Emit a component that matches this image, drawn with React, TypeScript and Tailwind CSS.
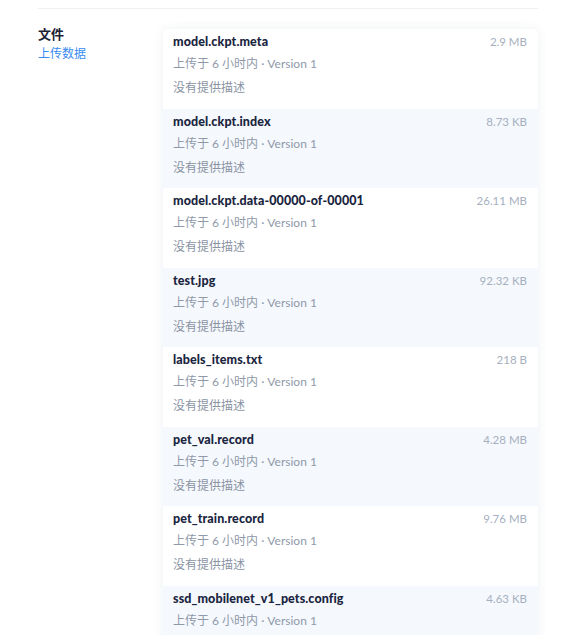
const files = [
    { name: 'model.ckpt.meta', size: '2.9 MB' },
    { name: 'model.ckpt.index', size: '8.73 KB' },
    { name: 'model.ckpt.data-00000-of-00001', size: '26.11 MB' },
    { name: 'test.jpg', size: '92.32 KB' },
    { name: 'labels_items.txt', size: '218 B' },
    { name: 'pet_val.record', size: '4.28 MB' },
    { name: 'pet_train.record', size: '9.76 MB' },
    { name: 'ssd_mobilenet_v1_pets.config', size: '4.63 KB' },
]

export default function App() {
    return (
        <div className="h-[635px] w-[573px] overflow-hidden bg-white pt-2 font-['Lato','Noto_Sans_CJK_SC',sans-serif]">
            <div className="ml-[38px] w-[500px] border-t border-[#eef0f4]">
                <div className="flex pt-[20px]">
                    {/* left label */}
                    <div className="-mt-[5px] w-[125px] shrink-0">
                        <h3 className="text-[13px] font-bold leading-[20px] text-[#1b2233]">文件</h3>
                        <a className="block text-[12px] leading-[20px] text-[#3a8bf2]">上传数据</a>
                    </div>
                    {/* file list */}
                    <div className="flex-1 overflow-hidden rounded-t-md shadow-[0_0_12px_rgba(30,50,90,0.07)]">
                        {files.map((f, i) => (
                            <div
                                key={f.name}
                                className={`h-[79.5px] pl-[10px] pr-[11px] pt-[3px] ${i % 2 === 1 ? 'bg-[#f5f8fd]' : 'bg-white'}`}
                            >
                                <div className="flex justify-between leading-[20px]">
                                    <span className="text-[12.5px] font-black tracking-[0.1px] text-[#1a2540]">{f.name}</span>
                                    <span className="text-[11.5px] text-[#a6b0c0]">{f.size}</span>
                                </div>
                                <p className="mt-[2px] text-[12px] leading-[20px] text-[#8f99aa]">上传于 6 小时内 · Version 1</p>
                                <p className="mt-[4px] text-[12px] leading-[20px] text-[#8a93a3]">没有提供描述</p>
                            </div>
                        ))}
                    </div>
                </div>
            </div>
        </div>
    )
}
